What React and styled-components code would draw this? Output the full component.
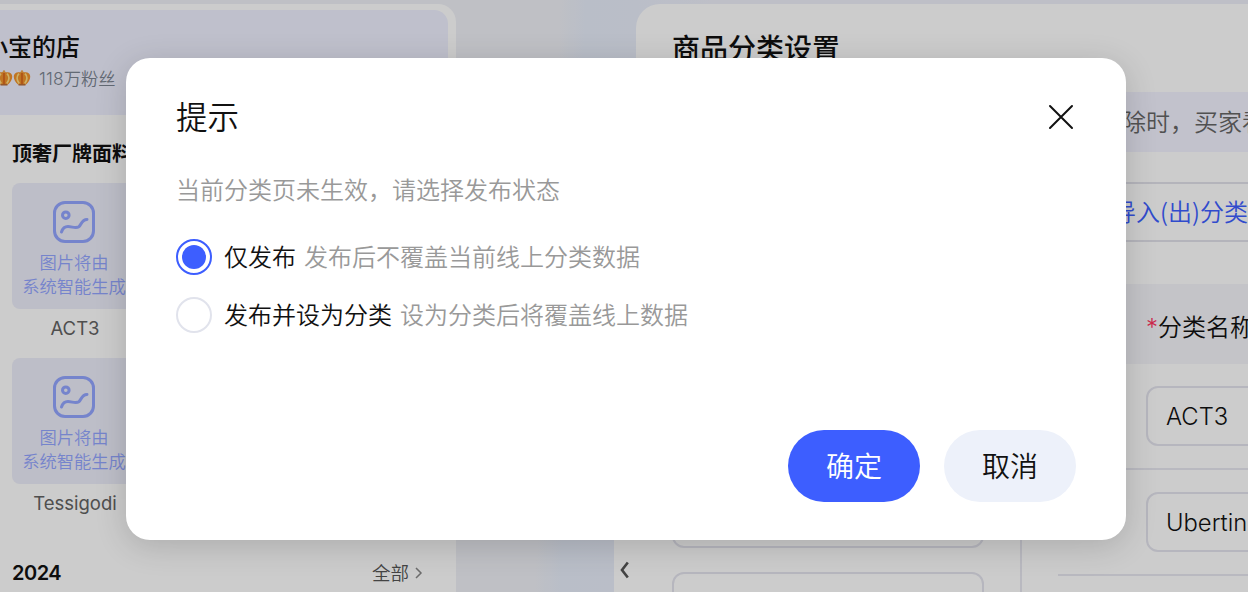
import React from 'react';
import styled, { createGlobalStyle } from 'styled-components';

const GlobalStyle = createGlobalStyle`
  * {
    box-sizing: border-box;
  }

  body {
    margin: 0;
    font-family: 'Noto Sans CJK SC', sans-serif;
    font-size: 24px;
    font-weight: 350;
    color: #111;
    overflow: hidden;
  }

  button, input {
    font-family: inherit;
    font-weight: inherit;
  }
`;

const Page = styled.div`
  position: relative;
  display: flex;
  width: 1248px;
  height: 592px;
  padding-top: 4px;
  overflow: hidden;
  background: linear-gradient(92.5deg, #eff0f7 44%, #e8eefa 46%, #e9eefb 50%, #eeeff9 56%);
`;

/* ---------- shop preview ---------- */

const Preview = styled.aside`
  flex: 0 0 456px;
  height: 588px;
  padding-top: 6px;
  background: #fff;
  border-radius: 0 18px 0 0;
`;

const ShopBanner = styled.header`
  width: 448px;
  height: 105px;
  padding-top: 18px;
  background: #eff1ff;
  border-radius: 0 14px 0 0;
`;

const ShopName = styled.div`
  margin-left: -16px;
  height: 36px;
  line-height: 36px;
  font-weight: 500;
`;

const ShopMeta = styled.div`
  display: flex;
  align-items: center;
  height: 28px;
  margin-left: -5px;
  font-size: 17.3px;
  color: #7c8592;
`;

const Fans = styled.span`
  margin: -1px 0 0 8px;

  b {
    font-family: Inter, sans-serif;
    font-weight: inherit;
    letter-spacing: 0.2px;
  }
`;

const PreviewTitle = styled.h3`
  margin: 23px 0 15px 12px;
  font-size: 20px;
  font-weight: 700;
  line-height: 30px;
  white-space: nowrap;
`;

const Product = styled.div`
  width: 126px;
  height: 175.4px;
  margin-left: 12px;
`;

const Thumb = styled.div`
  display: flex;
  flex-direction: column;
  align-items: center;
  height: 126px;
  padding: 18px 2px 0 0;
  border-radius: 8px;
  background: #edeefa;
  color: #93a5ff;
  font-size: 17.3px;
  line-height: 24px;
  text-align: center;
  white-space: nowrap;

  svg {
    margin-bottom: 6.5px;
  }
`;

const ProductName = styled.div`
  height: 38px;
  font-family: Inter, sans-serif;
  font-size: 18.5px;
  font-weight: 400;
  line-height: 39px;
  text-align: center;
  color: #636363;
`;

const YearRow = styled.div`
  display: flex;
  justify-content: space-between;
  align-items: center;
  height: 30px;
  margin: 24.2px 33px 0 12px;
`;

const Year = styled.span`
  font-family: Inter, sans-serif;
  font-size: 20px;
  font-weight: 600;
  letter-spacing: -0.5px;
`;

const More = styled.span`
  display: flex;
  align-items: center;
  gap: 5px;
  margin-top: -2px;
  font-size: 18.5px;
  color: #555;

  svg {
    margin-top: 2px;
  }
`;

/* ---------- category settings ---------- */

const Collapse = styled.div`
  flex: 0 0 22px;
  height: 108px;
  margin: 480px 0 0 158px;
  padding: 77px 0 0 5px;
  background: #fff;
  line-height: 0;
`;

const Settings = styled.main`
  flex: 0 0 612px;
  height: 588px;
  background: #fff;
  border-radius: 24px 0 0 0;
  overflow: hidden;
  white-space: nowrap;
`;

const SettingsTitle = styled.h2`
  height: 88px;
  margin: 0;
  padding-left: 36px;
  font-size: 28px;
  font-weight: 500;
  line-height: 87px;
`;

const Notice = styled.div`
  height: 60px;
  padding-left: 486px;
  line-height: 57px;
  background: #f3f3ff;
  color: #666;
`;

const ImportButton = styled.div`
  width: 260px;
  height: 60px;
  margin: 30px 0 42px 440px;
  padding-left: 34px;
  border: 2px solid #e1e2ea;
  line-height: 53px;
  color: #3d5eff;
`;

const Columns = styled.div`
  display: flex;
  height: 400px;
`;

const Tree = styled.div`
  display: flex;
  flex-direction: column;
  gap: 24px;
  flex: 0 0 386px;
  padding: 204px 36px 0;
  border-right: 2px solid #e8e8f0;
`;

const Field = styled.div`
  flex: none;
  width: 312px;
  height: 60px;
  padding-left: 18px;
  border: 2px solid #e4e4ee;
  border-radius: 12px;
  font-family: Inter, sans-serif;
  font-size: 23.8px;
  line-height: 57px;
`;

const Table = styled.div`
  flex: 0 0 300px;
  padding-left: 36px;
`;

const TableHead = styled.div`
  height: 80px;
  padding-left: 88px;
  background: #f6f6fa;
  line-height: 84px;
`;

const Required = styled.span`
  display: inline-block;
  width: 12px;
  font-family: Inter, sans-serif;
  color: #ff325f;
`;

const TableRow = styled.div`
  height: 106px;
  padding: 22px 0 22px 88px;
  border-bottom: 2px solid #e8e8f0;
`;

/* ---------- dialog ---------- */

const Mask = styled.div`
  position: absolute;
  inset: 0;
  display: flex;
  justify-content: center;
  align-items: flex-start;
  padding: 58px 0 0 4px;
  background: rgba(0, 0, 0, 0.2);
`;

const Dialog = styled.section`
  display: flex;
  flex-direction: column;
  width: 1000px;
  height: 482px;
  padding: 33px 50px 38px;
  background: #fff;
  border-radius: 24px;
  box-shadow: 0 6px 32px rgba(0, 0, 0, 0.16);
`;

const DialogHeader = styled.header`
  display: flex;
  justify-content: space-between;
  align-items: center;
  height: 52px;
`;

const DialogTitle = styled.h1`
  margin: -4px 0 0;
  font-size: 31.5px;
  font-weight: 350;
  line-height: 52px;
`;

const CloseButton = styled.button`
  padding: 0;
  border: none;
  background: none;
  line-height: 0;
  cursor: pointer;
`;

const Description = styled.p`
  margin: 28px 0 32px;
  line-height: 36px;
  color: #999;
`;

const Option = styled.label`
  display: flex;
  align-items: center;
  height: 36px;
  margin-bottom: 22px;
  line-height: 36px;
  cursor: pointer;
`;

const Radio = styled.span`
  display: flex;
  align-items: center;
  justify-content: center;
  width: 36px;
  height: 36px;
  margin-right: 12px;
  border: 2px solid ${props => (props.$checked ? '#3d5eff' : '#e1e3ec')};
  border-radius: 50%;

  &::after {
    content: '';
    width: 24px;
    height: 24px;
    border-radius: 50%;
    background: ${props => (props.$checked ? '#3d5eff' : 'transparent')};
  }
`;

const OptionText = styled.span`
  height: 39px;
`;

const OptionHint = styled.span`
  margin-left: 8px;
  color: #999;
`;

const Footer = styled.footer`
  display: flex;
  justify-content: flex-end;
  gap: 24px;
  margin-top: auto;
`;

const Button = styled.button`
  width: 132px;
  height: 72px;
  padding: 0 0 2px;
  border: none;
  border-radius: 36px;
  font-size: 28px;
  background: ${props => (props.$primary ? '#3d5eff' : '#edf1fa')};
  color: ${props => (props.$primary ? '#fff' : '#111')};
  cursor: pointer;
`;

const Crown = () => (
  <svg width="18" height="18" viewBox="0 0 18 18">
    <path d="M5 15.500C1 12 -.5 7 2 4.500c2-1.800 4.500-.8 7-1.700 2.500.9 5-.1 7 1.700 2.500 2.500 1 7.500-3 11z" fill="#f0932c" />
    <path d="M6.200 14.500C3.500 11 3.500 7 6 4.600M11.800 14.500c2.700-3.500 2.700-7.500.2-9.900" fill="none" stroke="#ffdd80" strokeWidth="1.800" />
    <path d="M9 4v11" stroke="#d8641b" strokeWidth="1.600" />
    <path d="M5.500 15.800h7" stroke="#b5652c" strokeWidth="1.400" />
    <circle cx="9" cy="2.400" r="1.200" fill="#eda550" />
  </svg>
);

const PictureIcon = () => (
  <svg width="42" height="42" viewBox="0 0 42 42" fill="none" stroke="currentColor" strokeWidth="3" strokeLinecap="round">
    <rect x="1.500" y="1.500" width="39" height="39" rx="10.500" />
    <circle cx="12.800" cy="14.200" r="3.300" />
    <path d="M8.500 31c1.200-3.600 3.600-5.400 6.500-5.400 4 0 8 2 10.800.2 2.800-1.900 2.500-7.300 8.200-7.400" />
  </svg>
);

const products = ['ACT3', 'Tessigodi'];
const categories = ['ACT3', 'Ubertino'];

const options = [
  { key: 'publish', label: '仅发布', hint: '发布后不覆盖当前线上分类数据' },
  { key: 'category', label: '发布并设为分类', hint: '设为分类后将覆盖线上数据' },
];

const App = () => {
  const [selected, setSelected] = React.useState('publish');

  return (
    <>
      <GlobalStyle />
      <Page>
        <Preview>
          <ShopBanner>
            <ShopName>小宝的店</ShopName>
            <ShopMeta>
              <Crown />
              <Crown />
              <Fans><b>118</b>万粉丝</Fans>
            </ShopMeta>
          </ShopBanner>
          <PreviewTitle>顶奢厂牌面料</PreviewTitle>
          {products.map(name => (
            <Product key={name}>
              <Thumb>
                <PictureIcon />
                <span>图片将由</span>
                <span>系统智能生成</span>
              </Thumb>
              <ProductName>{name}</ProductName>
            </Product>
          ))}
          <YearRow>
            <Year>2024</Year>
            <More>
              全部
              <svg width="9" height="12" viewBox="0 0 9 12" fill="none" stroke="#888" strokeWidth="1.500">
                <path d="M2 1l5 5-5 5" />
              </svg>
            </More>
          </YearRow>
        </Preview>

        <Collapse>
          <svg width="11" height="18" viewBox="0 0 11 18" fill="none" stroke="#555" strokeWidth="2.600">
            <path d="M8.800 1.500L3 9l5.800 7.500" />
          </svg>
        </Collapse>

        <Settings>
          <SettingsTitle>商品分类设置</SettingsTitle>
          <Notice>除时，买家看</Notice>
          <ImportButton>导入(出)分类</ImportButton>
          <Columns>
            <Tree>
              <Field />
              <Field />
            </Tree>
            <Table>
              <TableHead>
                <Required>*</Required>分类名称
              </TableHead>
              {categories.map(name => (
                <TableRow key={name}>
                  <Field>{name}</Field>
                </TableRow>
              ))}
            </Table>
          </Columns>
        </Settings>

        <Mask>
          <Dialog role="dialog">
            <DialogHeader>
              <DialogTitle>提示</DialogTitle>
              <CloseButton aria-label="关闭">
                <svg width="30" height="26" viewBox="0 0 30 26" stroke="#111" strokeWidth="2" strokeLinecap="round">
                  <path d="M4 2l22 22M26 2L4 24" />
                </svg>
              </CloseButton>
            </DialogHeader>
            <Description>当前分类页未生效，请选择发布状态</Description>
            {options.map(({ key, label, hint }) => (
              <Option key={key} onClick={() => setSelected(key)}>
                <Radio $checked={selected === key} />
                <OptionText>
                  {label}
                  <OptionHint>{hint}</OptionHint>
                </OptionText>
              </Option>
            ))}
            <Footer>
              <Button $primary>确定</Button>
              <Button>取消</Button>
            </Footer>
          </Dialog>
        </Mask>
      </Page>
    </>
  );
};

export default App;
